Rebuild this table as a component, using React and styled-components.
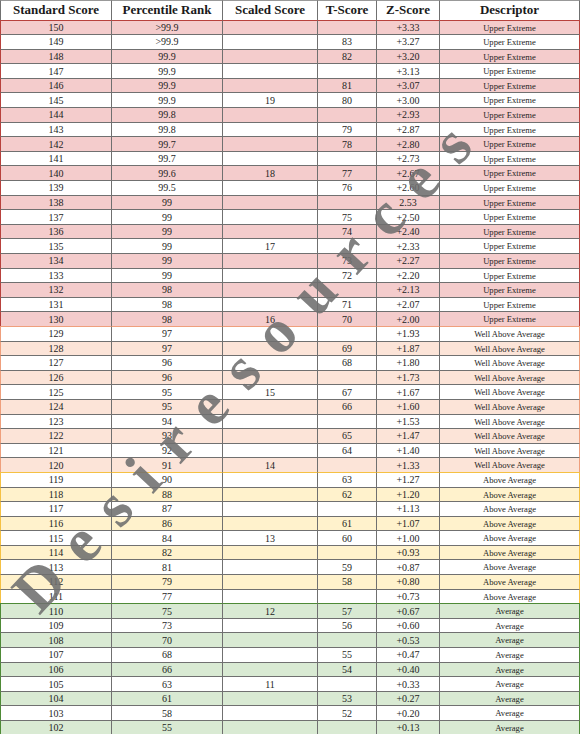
import styled, { createGlobalStyle } from 'styled-components';

const GlobalStyle = createGlobalStyle`
  html, body {
    margin: 0;
    padding: 0;
    background: #fff;
  }
  body {
    font-family: "Liberation Serif", "DejaVu Serif", serif;
    color: #222;
  }
`;

const BANDS = {
  upper: { label: 'Upper Extreme', fill: '#f4cccc', line: '#b8413c' },
  well: { label: 'Well Above Average', fill: '#fce4d8', line: '#ef9f7c' },
  above: { label: 'Above Average', fill: '#fff2cc', line: '#f5c143' },
  average: { label: 'Average', fill: '#d9ead3', line: '#4e8a36' },
};

// score, percentile, scaled, t, z
const ROWS = [
  [150, '>99.9', '', '', '+3.33'],
  [149, '>99.9', '', '83', '+3.27'],
  [148, '99.9', '', '82', '+3.20'],
  [147, '99.9', '', '', '+3.13'],
  [146, '99.9', '', '81', '+3.07'],
  [145, '99.9', '19', '80', '+3.00'],
  [144, '99.8', '', '', '+2.93'],
  [143, '99.8', '', '79', '+2.87'],
  [142, '99.7', '', '78', '+2.80'],
  [141, '99.7', '', '', '+2.73'],
  [140, '99.6', '18', '77', '+2.67'],
  [139, '99.5', '', '76', '+2.60'],
  [138, '99', '', '', '2.53'],
  [137, '99', '', '75', '+2.50'],
  [136, '99', '', '74', '+2.40'],
  [135, '99', '17', '', '+2.33'],
  [134, '99', '', '73', '+2.27'],
  [133, '99', '', '72', '+2.20'],
  [132, '98', '', '', '+2.13'],
  [131, '98', '', '71', '+2.07'],
  [130, '98', '16', '70', '+2.00'],
  [129, '97', '', '', '+1.93'],
  [128, '97', '', '69', '+1.87'],
  [127, '96', '', '68', '+1.80'],
  [126, '96', '', '', '+1.73'],
  [125, '95', '15', '67', '+1.67'],
  [124, '95', '', '66', '+1.60'],
  [123, '94', '', '', '+1.53'],
  [122, '93', '', '65', '+1.47'],
  [121, '92', '', '64', '+1.40'],
  [120, '91', '14', '', '+1.33'],
  [119, '90', '', '63', '+1.27'],
  [118, '88', '', '62', '+1.20'],
  [117, '87', '', '', '+1.13'],
  [116, '86', '', '61', '+1.07'],
  [115, '84', '13', '60', '+1.00'],
  [114, '82', '', '', '+0.93'],
  [113, '81', '', '59', '+0.87'],
  [112, '79', '', '58', '+0.80'],
  [111, '77', '', '', '+0.73'],
  [110, '75', '12', '57', '+0.67'],
  [109, '73', '', '56', '+0.60'],
  [108, '70', '', '', '+0.53'],
  [107, '68', '', '55', '+0.47'],
  [106, '66', '', '54', '+0.40'],
  [105, '63', '11', '', '+0.33'],
  [104, '61', '', '53', '+0.27'],
  [103, '58', '', '52', '+0.20'],
  [102, '55', '', '', '+0.13'],
];

const bandOf = (score) => {
  if (score >= 130) return 'upper';
  if (score >= 120) return 'well';
  if (score >= 111) return 'above';
  return 'average';
};

const HEADERS = ['Standard Score', 'Percentile Rank', 'Scaled Score', 'T-Score', 'Z-Score', 'Descriptor'];
const COLUMNS = '112px 111px 95px 59px 63px 140px';
const GRID = '#707070';

const Page = styled.div`
  position: relative;
  width: 581px;
  height: 734px;
  overflow: hidden;
  background: #fff;
`;

const Sheet = styled.div`
  width: 580px;
  display: flex;
  flex-direction: column;
`;

const HeaderRow = styled.div`
  display: grid;
  grid-template-columns: ${COLUMNS};
  height: 19.5px;
`;

const HeadCell = styled.div`
  box-sizing: border-box;
  display: flex;
  align-items: center;
  justify-content: center;
  border-top: 1px solid #999;
  border-right: 1px solid ${GRID};
  font-weight: bold;
  font-size: 13px;
  color: #1a1a1a;
  white-space: nowrap;
  &:first-child {
    border-left: 1px solid ${GRID};
  }
`;

const Row = styled.div`
  display: grid;
  grid-template-columns: ${COLUMNS};
  height: 14.6px;
  background: ${(p) => (p.$shaded ? BANDS[p.$band].fill : '#fff')};
`;

const Cell = styled.div`
  box-sizing: border-box;
  display: flex;
  align-items: center;
  justify-content: center;
  border-top: 1px solid ${(p) => (p.$first ? BANDS[p.$band].line : GRID)};
  border-right: 1px solid ${GRID};
  font-size: ${(p) => (p.$small ? '8.6px' : '10px')};
  line-height: 1;
  padding-top: 1px;
  color: #1e1e1e;
  white-space: nowrap;
  &:first-child {
    border-left: 1px solid ${(p) => BANDS[p.$band].line};
  }
  &:last-child {
    border-right: 1px solid ${(p) => BANDS[p.$band].line};
  }
`;

const Watermark = styled.span`
  position: absolute;
  left: 250px;
  top: 360px;
  transform: translate(-50%, -50%) rotate(-47deg);
  font-family: "Liberation Serif", "DejaVu Serif", serif;
  font-weight: bold;
  font-size: 62px;
  letter-spacing: 23px;
  color: rgba(110, 110, 110, 0.88);
  white-space: nowrap;
  pointer-events: none;
`;

export default function App() {
  return (
    <Page>
      <GlobalStyle />
      <Sheet>
        <HeaderRow>
          {HEADERS.map((h) => (
            <HeadCell key={h}>{h}</HeadCell>
          ))}
        </HeaderRow>
        {ROWS.map(([score, pct, scaled, t, z], i) => {
          const band = bandOf(score);
          const first = i === 0 || bandOf(ROWS[i - 1][0]) !== band;
          const common = { $band: band, $first: first };
          return (
            <Row key={score} $band={band} $shaded={score % 2 === 0}>
              <Cell {...common}>{score}</Cell>
              <Cell {...common}>{pct}</Cell>
              <Cell {...common}>{scaled}</Cell>
              <Cell {...common}>{t}</Cell>
              <Cell {...common}>{z}</Cell>
              <Cell {...common} $small>{BANDS[band].label}</Cell>
            </Row>
          );
        })}
      </Sheet>
      <Watermark>Desiresources</Watermark>
    </Page>
  );
}
